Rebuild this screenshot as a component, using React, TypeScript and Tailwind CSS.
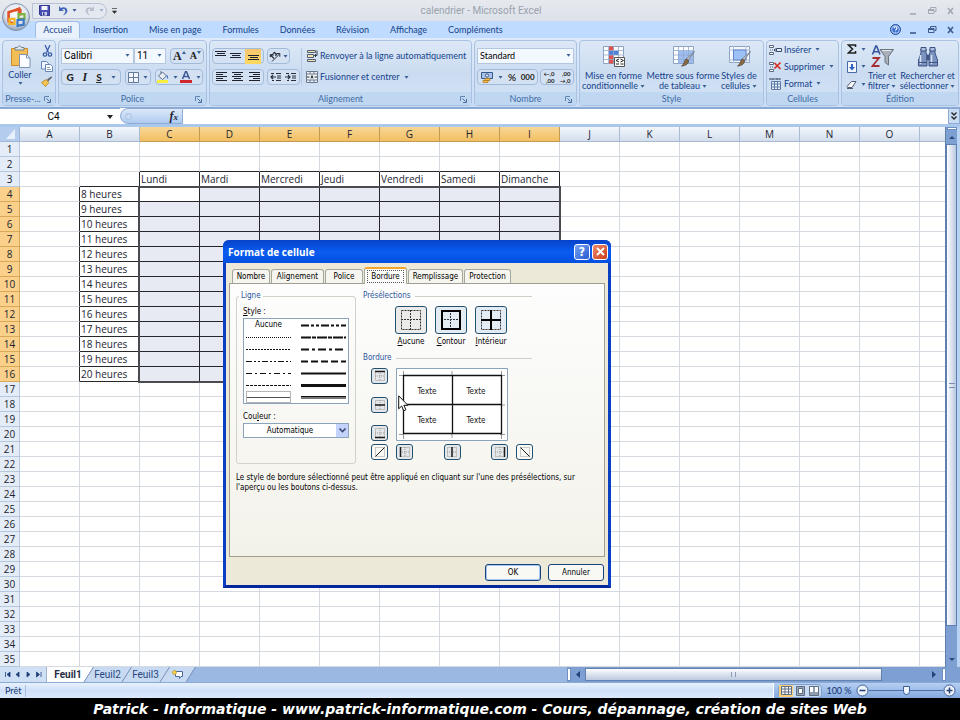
import type { ReactNode } from "react";
import clsx from "clsx";

const columns = ["A", "B", "C", "D", "E", "F", "G", "H", "I", "J", "K", "L", "M", "N", "O"];
const days = ["Lundi", "Mardi", "Mercredi", "Jeudi", "Vendredi", "Samedi", "Dimanche"];
const rows = Array.from({ length: 35 }, (_, i) => i + 1);
const menuTabs = ["Accueil", "Insertion", "Mise en page", "Formules", "Données", "Révision", "Affichage", "Compléments"];
const dialogTabs = [
  ["Nombre", "w-[38px]"],
  ["Alignement", "w-[53px]"],
  ["Police", "w-[38px]"],
  ["Bordure", "w-[43px]"],
  ["Remplissage", "w-[55px]"],
  ["Protection", "w-[47px]"]
];

const lineStyles = [
  { name: "Pointillé fin", dash: "1 1", width: 1 },
  { name: "Pointillé", dash: "2 1", width: 1 },
  { name: "Tiret deux points", dash: "6 2 2 2 2 2", width: 1 },
  { name: "Tiret point", dash: "6 3 2 3", width: 1 },
  { name: "Tirets fins", dash: "3 1", width: 1 },
  { name: "Continu fin", dash: "", width: 1 }
];
const boldStyles = [
  { name: "Tiret deux points moyen", dash: "8 2 3 2 3 2", width: 2 },
  { name: "Tiret point incliné", dash: "10 1 4 1", width: 2 },
  { name: "Tiret point moyen", dash: "8 3 3 3", width: 2 },
  { name: "Tirets moyens", dash: "7 3", width: 2 },
  { name: "Continu moyen", dash: "", width: 2 },
  { name: "Continu épais", dash: "", width: 3 },
  { name: "Double", dash: "", width: 3 }
];

function Caret({ className = "" }: { className?: string }) {
  return (
    <svg viewBox="0 0 5 3" className={clsx("h-[3px] w-[5px] shrink-0", className)} aria-hidden="true">
      <path d="M0.5 0h4L2.5 2.8z" fill="#3b5f94" />
    </svg>
  );
}

function Box({ children, className }: { children: ReactNode; className?: string }) {
  return (
    <div className={clsx("flex h-4 items-center justify-around rounded-sm border border-[#a3bbdb] bg-[#d3e1f3]", className)}>
      {children}
    </div>
  );
}

function IconButton({ label, children, className }: { label: string; children: ReactNode; className?: string }) {
  return (
    <button type="button" aria-label={label} className={clsx("flex items-center justify-center gap-1", className)}>
      {children}
    </button>
  );
}

function Group({ title, width, launcher = true, children }: { title: string; width: string; launcher?: boolean; children: ReactNode }) {
  return (
    <section className={clsx("flex h-[66px] flex-col overflow-hidden rounded-sm border border-[#a9c2e2] bg-linear-to-b from-[#dce8f6] via-[#cbdcf1] to-[#d3e3f7]", width)}>
      <div className="h-[51px]">{children}</div>
      <div className="relative flex h-[13px] items-center justify-center bg-[#c0d7f2] text-[#416ba5]">
        <span className={clsx("leading-3", title.startsWith("Presse") && "pr-3")}>{title}</span>
        {launcher && (
          <button type="button" aria-label={`Options ${title}`} className="absolute right-1 top-1">
            <svg viewBox="0 0 7 7" className="size-[7px]">
              <path d="M0.5 5V0.5H5" fill="none" stroke="#6285b5" />
              <path d="M2.5 2.5l3 3M6.5 3v3.5H3" fill="none" stroke="#4a6f9f" />
            </svg>
          </button>
        )}
      </div>
    </section>
  );
}

function OfficeLogo() {
  return (
    <svg viewBox="0 0 30 30" className="size-[30px]" aria-hidden="true">
      <defs>
        <radialGradient id="orb" cx="50%" cy="35%" r="65%">
          <stop offset="0" stopColor="#ffffff" />
          <stop offset="0.6" stopColor="#dfe5ee" />
          <stop offset="1" stopColor="#8f9fb8" />
        </radialGradient>
      </defs>
      <circle cx="15" cy="15" r="13.5" fill="url(#orb)" stroke="#8291aa" />
      <path d="M13 8.5l5-1.6v4M13 8.5l-5.4 1.8v9L13 22" fill="none" stroke="#e0532a" strokeWidth="2.6" />
      <path d="M14 8.6l4-1.8 1.3 1v5.8" fill="none" stroke="#e0532a" strokeWidth="2.6" />
      <path d="M17.5 12.2h6v4.6h-6z" fill="none" stroke="#7bb33c" strokeWidth="2.2" />
      <path d="M8.5 16.8h5v5h-5z" fill="none" stroke="#f1b52b" strokeWidth="2.2" />
      <path d="M16.5 18.2l6.2-.8v5.2l-6.2 1.2z" fill="none" stroke="#3b78c6" strokeWidth="2.2" />
    </svg>
  );
}

function WindowControls({ color }: { color: string }) {
  return (
    <svg viewBox="0 0 46 10" className="h-2.5 w-[46px]" fill="none" stroke={color} aria-hidden="true">
      <path d="M1 8h6" strokeWidth="1.6" />
      <path d="M21.5 3V1.500h5.500v4h-1.500" />
      <path d="M19.500 3.500h5.500v4h-5.500zM19.500 4.500h5.500" />
      <path d="M39 2l5 6M44 2l-5 6" strokeWidth="1.6" />
    </svg>
  );
}

function TitleBar() {
  return (
    <header className="flex h-[21px] items-center bg-linear-to-b from-[#e6e9ee] to-[#dde2ea] pl-8">
      <div className="flex h-4 w-[75px] items-center gap-2 rounded-r-full border border-[#b8c2d3] bg-[#e3e8f1] pl-1.5">
        <button type="button" aria-label="Enregistrer">
          <svg viewBox="0 0 11 11" className="size-[11px]">
            <path d="M0.500 0.500h10v10h-9l-1-1z" fill="#4a4fb4" stroke="#33388c" />
            <path d="M2.500 1h6v4h-6z" fill="#f4f6fb" />
            <path d="M3 7h5v3.500H3z" fill="#c9cdec" />
            <path d="M4 7.500h1.500V10H4z" fill="#33388c" />
          </svg>
        </button>
        <IconButton label="Annuler la frappe">
          <svg viewBox="0 0 10 10" className="size-2.5">
            <path d="M1 0v5h5L4.300 3.400C6 2.400 7.600 3.500 7.300 5.400 7.100 7 6 8 5 9.500 8 8 9.600 6.500 9.400 4.200 9 1.300 5.400.3 2.800 2z" fill="#4466b8" />
          </svg>
          <Caret />
        </IconButton>
        <IconButton label="Rétablir" className="opacity-40">
          <svg viewBox="0 0 10 10" className="size-2.5">
            <path d="M9 0v5H4l1.700-1.600C4 2.400 2.400 3.500 2.700 5.400 2.900 7 4 8 5 9.500 2 8 .4 6.500.6 4.200 1 1.300 4.600.3 7.200 2z" fill="#7a8599" />
          </svg>
          <Caret />
        </IconButton>
      </div>
      <button type="button" aria-label="Personnaliser la barre" className="ml-[5px]">
        <svg viewBox="0 0 5 6" className="h-1.5 w-[5px]">
          <path d="M0 .5h5M.5 3h4L2.500 5.500z" fill="#333" stroke="#333" strokeWidth=".7" />
        </svg>
      </button>
      <h1 className="flex-1 pr-16 text-center font-[Roboto] text-[10px] text-[#9aa2ae]">calendrier - Microsoft Excel</h1>
      <div className="pr-[5px]">
        <WindowControls color="#a3a9b3" />
      </div>
    </header>
  );
}

function MenuTabs() {
  return (
    <nav className="flex h-[17px] items-end bg-[#bfdbff] pl-[35px] text-[#15428b]">
      {menuTabs.map((tab, i) => (
        <button
          key={tab}
          type="button"
          className={clsx(
            "h-[17px] leading-4",
            i === 0 ? "-mr-2 w-[45px] rounded-t-sm border border-b-0 border-[#9ebce6] bg-[#e8f1fc]" : "ml-[21px]"
          )}
        >
          {tab}
        </button>
      ))}
      <div className="flex flex-1 items-center justify-end gap-2 self-center pr-[5px]">
        <svg viewBox="0 0 11 11" className="size-[11px]" role="img" aria-label="Aide">
          <circle cx="5.500" cy="5.500" r="5" fill="#3a6fd0" stroke="#274f9f" />
          <circle cx="5.500" cy="5.500" r="3.900" fill="none" stroke="#b9d2f7" />
          <path d="M4 4.300c0-2 3-2 3 0 0 1.200-1.500 1.100-1.500 2.300M5.500 7.700v.8" fill="none" stroke="#fff" strokeWidth="1.100" />
        </svg>
        <WindowControls color="#3c5a8c" />
      </div>
    </nav>
  );
}

function Lines({ rows: list }: { rows: number[][] }) {
  return (
    <svg viewBox="0 0 11 10" className="h-2.5 w-[11px]" stroke="#1d222e" shapeRendering="crispEdges" aria-hidden="true">
      {list.map(([x, y, w], i) => (
        <path key={i} d={`M${x} ${y - 0.5}h${w}`} />
      ))}
    </svg>
  );
}

function Indent({ flip = false }: { flip?: boolean }) {
  return (
    <svg viewBox="0 0 12 10" className="h-2.5 w-3" fill="none" stroke="#2a2f3c" strokeWidth="1.200" aria-hidden="true">
      <path d="M1 1.500h3M6 1.500h5M7 4h4M7 6h4M6 8.500h5M2 8.500h2" />
      <path d={flip ? "M0 5h5M3 3l2 2-2 2" : "M1 5h5M3 3L1 5l2 2"} />
    </svg>
  );
}

function TableIcon({ kind }: { kind: "conditional" | "format" | "cell" }) {
  return (
    <svg viewBox="0 0 23 23" className="size-[23px]" aria-hidden="true">
      {kind === "cell" ? (
        <>
          <path d="M1.500 1.500h20v16h-20z" fill="#f4f7fb" stroke="#8fa3bd" />
          <path d="M5.500 1v17M18 1v17M1 5h21M1 15h21" stroke="#aebfd5" />
          <path d="M5.500 5h12.500v10H5.500z" fill="#9dc0f5" stroke="#5d86cc" />
        </>
      ) : (
        <>
          <path d="M1.500 1.500h20v17h-20z" fill="#fdfdfe" stroke="#8fa3bd" />
          {kind === "format" && <path d="M6 6h15v12H6z" fill="#9fbdf0" />}
          {kind === "conditional" && (
            <>
              <path d="M7 1.500h5v17H7z" fill="#e0524c" />
              <path d="M7 6h10v4H7z" fill="#4e80d8" />
            </>
          )}
          <path d="M6.500 1v18M11.500 1v18M16.500 1v18M1 5.500h21M1 10h21M1 14.500h21" stroke="#8fa9cf" strokeWidth=".8" />
        </>
      )}
      {kind === "conditional" ? (
        <>
          <path d="M12.500 12.500h10v9h-10z" fill="#fff" stroke="#555" />
          <path d="M17 14l-3 1.500 3 1.500M14 19h3M18.500 14l3 1.500-3 1.500M18.500 19h3" fill="none" stroke="#222" />
        </>
      ) : (
        <>
          <path d="M22.500 6.500l-6.500 9-2-1.500z" fill="#c3c9d2" stroke="#6b7280" strokeWidth=".8" />
          <path d="M16.500 15.500c.5 3-3 5.500-7 5.500 3-1.500 2.500-5 4.500-7z" fill="#8a6a45" stroke="#4e3e2c" strokeWidth=".7" />
        </>
      )}
    </svg>
  );
}

function BigButton({ icon, lines, className }: { icon: ReactNode; lines: [string, string]; className?: string }) {
  return (
    <button type="button" className={clsx("flex flex-col items-center leading-[10px]", className)}>
      <span className="mb-[3px] flex h-[23px] items-center">{icon}</span>
      <span className="whitespace-nowrap">{lines[0]}</span>
      <span className="flex items-center gap-0.5 whitespace-nowrap">
        {lines[1]}
        <Caret />
      </span>
    </button>
  );
}

function CellsIcon({ kind }: { kind: string }) {
  return (
    <svg viewBox="0 0 13 12" className="h-3 w-[13px]" aria-hidden="true">
      {kind === "Format" ? (
        <>
          <path d="M1 1h10M1 0v2M4 0v2M8 0v2M11 0v2" stroke="#4d5b70" fill="none" />
          <path d="M2.500 3.500h9v8h-9zM2.500 6h9M2.500 9h9M5.500 3v9M8.500 3v9" fill="#e8effa" stroke="#5d7ba8" />
        </>
      ) : (
        <>
          <path d="M.5 1.500h4v2h-4zM.5 8.500h4v2h-4z" fill="#fff" stroke="#5a6a82" />
          <path d="M1 6h3" stroke="#5a6a82" strokeDasharray="1 1" />
          {kind === "Insérer" ? (
            <path d="M7.500 4.500h5v3h-5zM5 6h3M6.500 4.500L5 6l1.500 1.500" fill="#e8effa" stroke="#354a6b" />
          ) : (
            <path d="M5.500 2l6 6M11.500 1.500l-6 6" stroke="#d42c22" strokeWidth="1.700" />
          )}
        </>
      )}
    </svg>
  );
}

function Ribbon() {
  return (
    <div className="flex h-[70px] gap-[2px] border-b border-[#8aa9d4] bg-linear-to-b from-[#dfeafa] to-[#c9dcf5] px-0.5 pt-0.5 text-[#15428b]">
      <Group title="Presse-..." width="w-[54px] shrink-0">
        <div className="flex gap-2 pl-1 pt-1">
          <button type="button" className="flex w-[26px] flex-col items-center">
            <svg viewBox="0 0 21 23" className="h-[23px] w-[21px]" aria-hidden="true">
              <path d="M1.500 3.500h16v17h-16z" fill="#f3bd55" stroke="#c98b2c" />
              <path d="M5 4.500V2.500h2.500C8 .5 11 .5 11.500 2.500H14v2.500H5z" fill="#dfe4ea" stroke="#75808e" />
              <path d="M9.500 9.500h7l3.500 3.500v9.500H9.500z" fill="#fafcff" stroke="#7f93b5" />
              <path d="M16.500 9.500V13H20" fill="none" stroke="#7f93b5" />
            </svg>
            <span className="mt-px leading-[11px]">Coller</span>
            <Caret className="mt-0.5" />
          </button>
          <div className="flex flex-col gap-1">
            <IconButton label="Couper">
              <svg viewBox="0 0 11 12" className="h-3 w-[11px]" fill="none" stroke="#3c5fa8">
                <path d="M3 0l3.500 7.500M8 0L4.500 7.500" strokeWidth="1.300" />
                <circle cx="3" cy="9.500" r="1.700" strokeWidth="1.300" />
                <circle cx="8" cy="9.500" r="1.700" strokeWidth="1.300" />
              </svg>
            </IconButton>
            <IconButton label="Copier">
              <svg viewBox="0 0 12 11" className="h-[11px] w-3">
                <path d="M.5.5h5l2 2v5.500h-7z" fill="#eef4fd" stroke="#6783b5" />
                <path d="M4.500 3.500h5l2 2v5h-7z" fill="#fff" stroke="#6783b5" />
                <path d="M6 6.500h3M6 8.500h4" stroke="#6783b5" strokeWidth=".8" />
              </svg>
            </IconButton>
            <IconButton label="Reproduire la mise en forme">
              <svg viewBox="0 0 12 11" className="h-[11px] w-3">
                <path d="M11.500 1L7 5.500 5.500 4 10 .5z" fill="#5a5f6b" />
                <path d="M5 3.500L8 6.500 4.500 10.500.5 6.500z" fill="#f4c352" stroke="#b58722" strokeWidth=".8" />
              </svg>
            </IconButton>
          </div>
        </div>
      </Group>

      <Group title="Police" width="w-[149px] shrink-0">
        <div className="flex flex-col gap-[5px] pl-0.5 pr-px pt-[7px]">
          <div className="flex gap-1">
            <div className="flex">
              {[["Police", "Calibri", "w-[73px]"], ["Taille", "11", "w-8"]].map(([label, value, width]) => (
                <div key={label} className={clsx("relative", width)}>
                  <select aria-label={label} className="h-4 w-full appearance-none border border-[#b3c7e1] bg-[#f3f8fe] pl-0.5 font-[Roboto] text-[10px] leading-3 text-black">
                    <option>{value}</option>
                  </select>
                  <Caret className="pointer-events-none absolute right-1 top-1.5" />
                </div>
              ))}
            </div>
            <Box className="w-[34px]">
              <IconButton label="Agrandir la police" className="font-['Liberation_Serif'] text-xs font-bold leading-3 text-[#222]">
                A<svg viewBox="0 0 4 3" className="-ml-1 mb-2 h-[3px] w-1"><path d="M0 3h4L2 0z" fill="#3b5f94" /></svg>
              </IconButton>
              <IconButton label="Réduire la police" className="font-['Liberation_Serif'] text-[10px] font-bold leading-3 text-[#222]">
                A<svg viewBox="0 0 4 3" className="-ml-1 mb-2 h-[3px] w-1"><path d="M0 0h4L2 3z" fill="#3b5f94" /></svg>
              </IconButton>
            </Box>
          </div>
          <div className="flex gap-1">
            <Box className="w-[60px] text-[10px] text-[#222]">
              <IconButton label="Gras" className="font-black">G</IconButton>
              <IconButton label="Italique" className="font-['Liberation_Serif'] text-xs font-bold italic leading-3">I</IconButton>
              <IconButton label="Souligné" className="font-bold underline">S</IconButton>
              <Caret />
            </Box>
            <Box className="w-[26px]">
              <IconButton label="Bordures">
                <svg viewBox="0 0 11 11" className="size-[11px]">
                  <path d="M.5.5h10v10H.5zM5.500 1v9M1 5.500h9" fill="#f3f7fd" stroke="#64799b" />
                </svg>
                <Caret />
              </IconButton>
            </Box>
            <Box className="w-12">
              <IconButton label="Couleur de remplissage">
                <svg viewBox="0 0 12 12" className="size-3">
                  <path d="M5.500 1L1.500 5l4 3.500L9.500 5zM4 3V0" fill="#e9eef6" stroke="#5e6f8b" />
                  <path d="M9 4c2 0 2.500 2 2 4-1-1-1-2-2-4z" fill="#3f6ec3" />
                  <path d="M0 9h11v3H0z" fill="#f5ee3d" />
                </svg>
                <Caret />
              </IconButton>
              <IconButton label="Couleur de police">
                <svg viewBox="0 0 12 12" className="size-3">
                  <path d="M2.500 8L5.500.8h1L9.500 8M4 5.500h4" fill="none" stroke="#3e5a96" strokeWidth="1.500" />
                  <path d="M0 9h12v3H0z" fill="#d0262d" />
                </svg>
                <Caret />
              </IconButton>
            </Box>
          </div>
        </div>
      </Group>

      <Group title="Alignement" width="w-[263px] shrink-0">
        <div className="flex pt-[7px]">
          <div className="flex w-[92px] flex-col gap-[5px] border-r border-[#b4cae6] pl-0.5">
            <div className="flex gap-[3px]">
              <Box className="w-[52px]">
                <IconButton label="Aligner en haut"><Lines rows={[[0, 1, 11], [2, 3, 8], [0, 5, 11]]} /></IconButton>
                <IconButton label="Aligner au centre"><Lines rows={[[0, 3, 11], [2, 5, 8], [0, 7, 11]]} /></IconButton>
                <IconButton label="Aligner en bas" className="h-[15px] w-4 bg-linear-to-b from-[#f7c572] to-[#fcd95c]"><Lines rows={[[0, 5, 11], [2, 7, 8], [0, 9, 11]]} /></IconButton>
              </Box>
              <Box className="w-[23px]">
                <IconButton label="Orientation">
                  <svg viewBox="0 0 12 11" className="h-[11px] w-3" fill="none" stroke="#2a2f3c">
                    <path d="M3 10.500L10.500 3M7.500 2.500h3.300v3.300" />
                    <path d="M1 3.500l4 4M1.500 6c-1-2 2-3.500 3-1.500M5 1l3 3M4 2.500c2-1.500 4 .5 2.500 2.500" strokeWidth="1.200" />
                  </svg>
                  <Caret className="-ml-0.5" />
                </IconButton>
              </Box>
            </div>
            <div className="flex gap-[3px]">
              <Box className="w-[52px]">
                <IconButton label="Gauche"><Lines rows={[[0, 1, 11], [0, 3, 7], [0, 5, 11], [0, 7, 7], [0, 9, 11]]} /></IconButton>
                <IconButton label="Centrer"><Lines rows={[[0, 1, 11], [2, 3, 7], [0, 5, 11], [2, 7, 7], [0, 9, 11]]} /></IconButton>
                <IconButton label="Droite"><Lines rows={[[0, 1, 11], [4, 3, 7], [0, 5, 11], [4, 7, 7], [0, 9, 11]]} /></IconButton>
              </Box>
              <Box className="w-[33px]">
                <IconButton label="Diminuer le retrait"><Indent /></IconButton>
                <IconButton label="Augmenter le retrait"><Indent flip /></IconButton>
              </Box>
            </div>
          </div>
          <div className="flex flex-col items-start gap-[5px] pl-1 text-[#15428b]">
            <button type="button" className="flex h-4 items-center gap-0.5 whitespace-nowrap">
              <svg viewBox="0 0 12 12" className="size-3" aria-hidden="true">
                <path d="M1.500.5h8v2h-8zM1.500 4.500h6v3h-6zM1.500 9.500h8v2h-8z" fill="#f3e3b9" stroke="#555e6e" />
                <path d="M11 .5v5H8.500M10 4L8.500 5.500 10 7" fill="none" stroke="#333c4d" />
              </svg>
              Renvoyer à la ligne automatiquement
            </button>
            <button type="button" className="flex h-4 items-center gap-0.5 whitespace-nowrap">
              <svg viewBox="0 0 12 12" className="size-3" aria-hidden="true">
                <path d="M.5.5h11v11H.5z" fill="#f4f7fc" stroke="#68788f" />
                <path d="M.5 3h11M.5 9h11M4 .5V3M8 .5V3M4 9v2.500M8 9v2.500" stroke="#68788f" />
                <path d="M1 6h2.500M8.500 6H11M5 7.500L6 4.500l1 3" fill="none" stroke="#222" />
              </svg>
              Fusionner et centrer
              <Caret className="ml-0.5" />
            </button>
          </div>
        </div>
      </Group>

      <Group title="Nombre" width="w-[103px] shrink-0">
        <div className="flex flex-col gap-[5px] px-0.5 pt-[7px]">
          <div className="relative">
            <select aria-label="Format de nombre" className="h-4 w-full appearance-none border border-[#b3c7e1] bg-[#f3f8fe] pl-0.5 leading-3 text-black">
              <option>Standard</option>
            </select>
            <Caret className="pointer-events-none absolute right-[3px] top-1.5" />
          </div>
          <div className="flex justify-between">
            <Box className="w-[61px] text-[10px] text-[#222]">
              <IconButton label="Comptabilité">
                <svg viewBox="0 0 14 12" className="h-3 w-3.5">
                  <path d="M1.500 1.500h11v6h-11z" fill="#a9c3ea" stroke="#38558c" />
                  <circle cx="7" cy="4.500" r="1.600" fill="#e9f0fb" stroke="#38558c" />
                  <path d="M5 7.500h5v2H5zM3 9.500h5v2H3z" fill="#f6c452" stroke="#b37a1d" strokeWidth=".8" />
                </svg>
                <Caret />
              </IconButton>
              <IconButton label="Pourcentage" className="font-semibold">%</IconButton>
              <IconButton label="Séparateur de milliers" className="text-[8px] font-bold">000</IconButton>
            </Box>
            <Box className="w-[34px] text-[6px] font-bold leading-[7px] text-[#222]">
              <button type="button" aria-label="Ajouter une décimale" className="text-right">←,0<br />,00</button>
              <button type="button" aria-label="Réduire les décimales" className="text-right">,00<br />→,0</button>
            </Box>
          </div>
        </div>
      </Group>

      <Group title="Style" width="w-[185px] shrink-0" launcher={false}>
        <div className="flex gap-0.5 pl-0.5 pt-1">
          <BigButton className="w-[63px]" icon={<TableIcon kind="conditional" />} lines={["Mise en forme", "conditionnelle"]} />
          <BigButton className="w-[72px]" icon={<TableIcon kind="format" />} lines={["Mettre sous forme", "de tableau"]} />
          <BigButton className="w-9" icon={<TableIcon kind="cell" />} lines={["Styles de", "cellules"]} />
        </div>
      </Group>

      <Group title="Cellules" width="w-[73px] shrink-0" launcher={false}>
        <div className="flex h-full flex-col justify-around pl-0.5">
          {["Insérer", "Supprimer", "Format"].map((name) => (
            <button key={name} type="button" className="flex items-center gap-0.5 leading-3">
              <CellsIcon kind={name} />
              {name}
              <Caret className="ml-0.5" />
            </button>
          ))}
        </div>
      </Group>

      <Group title="Édition" width="min-w-[118px] flex-1" launcher={false}>
        <div className="flex h-full pl-1">
          <div className="flex w-[20px] flex-col justify-around">
            <IconButton label="Somme automatique" className="text-[#222]">
              <svg viewBox="0 0 10 10" className="size-2.5"><path d="M8.500 3V1H1.500l4 4-4 4h7V7" fill="none" stroke="#222" strokeWidth="1.600" /></svg>
              <Caret />
            </IconButton>
            <IconButton label="Remplissage">
              <svg viewBox="0 0 10 12" className="h-3 w-2.5">
                <path d="M.5.5h9v11h-9z" fill="#f3f7fe" stroke="#4769a8" />
                <path d="M4 3h2v3h2L5 9.500 2 6h2z" fill="#2f62c4" />
              </svg>
              <Caret />
            </IconButton>
            <IconButton label="Effacer">
              <svg viewBox="0 0 11 9" className="h-[9px] w-[11px]">
                <path d="M1 6.500L5.500 1.500h4.500L6 7.500H1.500z" fill="#fdfdfe" stroke="#4f5b70" />
                <path d="M1 8.500h6" stroke="#4f5b70" />
              </svg>
              <Caret />
            </IconButton>
          </div>
          <BigButton
            className="w-8 pt-1"
            icon={
              <svg viewBox="0 0 23 23" className="size-[23px]" aria-hidden="true">
                <path d="M1.500 9.500L4.800 1h.8L9 9.500M2.800 6.800h5" fill="none" stroke="#38549b" strokeWidth="1.600" />
                <path d="M1.500 13h6.500l-6.500 8h7" fill="none" stroke="#a52f35" strokeWidth="1.800" />
                <path d="M9 4.500h13.500l-5 7v8.500l-3.500-2.500v-6z" fill="#a9b0ba" stroke="#6b737f" />
                <path d="M11 5.500h9" stroke="#e6e9ee" strokeWidth="1.200" />
              </svg>
            }
            lines={["Trier et", "filtrer"]}
          />
          <BigButton
            className="w-[59px] pt-1"
            icon={
              <svg viewBox="0 0 22 21" className="h-[21px] w-[22px]" aria-hidden="true">
                <path d="M4 3h5v4l1 1v12H1.500v-6L4 7zM13 3h5v4l2.500 7v6H12V8l1-1z" fill="#7c93bf" stroke="#3d5384" />
                <path d="M4 1.500h5V5H4zM13 1.500h5V5h-5z" fill="#aebfe0" stroke="#3d5384" />
                <path d="M9.500 9h3v5h-3z" fill="#3d5384" />
                <path d="M3.500 9v9M14.500 9v9" stroke="#dbe5f7" strokeWidth="1.500" />
                <path d="M1.500 16.500H10M12 16.500h8.500" stroke="#3d5384" />
              </svg>
            }
            lines={["Rechercher et", "sélectionner"]}
          />
        </div>
      </Group>
    </div>
  );
}

function FormulaBar() {
  return (
    <div className="flex h-[19px] border-b-[3px] border-[#a9c8ec] bg-white font-[Roboto] text-[10px]">
      <input aria-label="Zone Nom" defaultValue="C4" className="h-4 w-[107px] border-t border-[#8aa9d4] bg-white text-center text-black" />
      <button type="button" aria-label="Liste des noms" className="flex h-4 w-[13px] items-center border-t border-[#8aa9d4]">
        <svg viewBox="0 0 6 4" className="h-1 w-1.5"><path d="M0 0h6L3 4z" fill="#222" /></svg>
      </button>
      <div className="flex h-4 w-[63px] items-center justify-between rounded-l-full border border-[#8fabd3] bg-linear-to-b from-[#dce9f9] to-[#aecbf0] pl-1 pr-1">
        <span className="size-[7px] rounded-full border border-[#a9bfdf] bg-[#c9dbf2]" />
        <span className="font-['Liberation_Serif'] text-xs font-bold italic leading-3 text-[#223]">
          f<span className="text-[9px]">x</span>
        </span>
      </div>
      <input aria-label="Barre de formule" className="h-4 min-w-0 flex-1 border-t border-[#8aa9d4] bg-white" />
      <button type="button" aria-label="Développer" className="flex h-4 w-3 items-center justify-center border border-[#8fabd3] bg-[#c8dcf4]">
        <svg viewBox="0 0 6 8" className="h-2 w-1.5" fill="none" stroke="#222" strokeWidth="1.300">
          <path d="M.5.5L3 3 5.500.5M.5 4.500L3 7l2.500-2.500" />
        </svg>
      </button>
    </div>
  );
}

function cellText(row: number, col: number) {
  if (row === 3 && col >= 2 && col <= 8) return days[col - 2];
  if (row >= 4 && row <= 16 && col === 1) return `${row + 4} heures`;
  return "";
}

function Sheet() {
  return (
    <div className="relative min-w-0 flex-1 overflow-hidden">
      <table className="w-full table-fixed border-separate border-spacing-0 font-['Open_Sans',sans-serif] text-[10px] leading-[14px] text-[#1c2430]">
        <colgroup>
          <col className="w-5" />
          {columns.map((c) => (
            <col key={c} className="w-[60px]" />
          ))}
          <col />
        </colgroup>
        <thead>
          <tr className="h-[15px]">
            <th aria-label="Tout sélectionner" className="border-b border-r border-[#9eb6d4] bg-[#b4cdee] p-0">
              <svg viewBox="0 0 19 14" className="block h-3.5 w-full"><path d="M15 2v10H6z" fill="#e7f0fb" /></svg>
            </th>
            {columns.map((c, i) => (
              <th
                key={c}
                className={clsx(
                  "border-b border-r p-0 font-normal",
                  i >= 2 && i <= 8
                    ? "border-[#c29a52] bg-linear-to-b from-[#f8d797] to-[#f2bf61]"
                    : "border-[#a9bbd1] bg-linear-to-b from-[#f3f7fc] to-[#d3deec]"
                )}
              >
                {c}
              </th>
            ))}
            <th aria-label="P" className="border-b border-[#a9bbd1] bg-linear-to-b from-[#f3f7fc] to-[#d3deec] p-0" />
          </tr>
        </thead>
        <tbody>
          {rows.map((row) => (
            <tr key={row} className="h-[15px]">
              <th
                className={clsx(
                  "border-b border-r p-0 font-normal",
                  row >= 4 && row <= 16 ? "border-[#d9a95a] bg-[#fad08a]" : "border-[#b6c8de] bg-[#e4ecf7]"
                )}
              >
                {row}
              </th>
              {columns.map((c, col) => {
                const table = col >= 2 && col <= 8;
                const blackRight = (row >= 3 && row <= 16 && col >= 1 && col <= 8) || (row >= 4 && row <= 16 && col === 0);
                const blackBottom = (row >= 2 && row <= 16 && table) || (row >= 3 && row <= 16 && col === 1);
                return (
                  <td
                    key={c}
                    className={clsx(
                      "overflow-hidden whitespace-nowrap border-b border-r p-0 pl-px",
                      blackRight ? "border-r-[#26262b]" : "border-r-[#d5dae1]",
                      blackBottom ? "border-b-[#26262b]" : "border-b-[#d5dae1]",
                      table && row >= 4 && row <= 16 && !(row === 4 && col === 2) ? "bg-[#e8eaf3]" : "bg-white"
                    )}
                  >
                    {cellText(row, col)}
                  </td>
                );
              })}
              <td className="border-b border-[#d5dae1] bg-white p-0" />
            </tr>
          ))}
        </tbody>
      </table>
      {/* selection C4:I16 */}
      <div className="pointer-events-none absolute left-[138px] top-[59px] h-[197px] w-[423px] border-2 border-[#4a4a50]" />
    </div>
  );
}

function VerticalScroll() {
  return (
    <div className="flex w-[15px] shrink-0 flex-col items-center border-l border-r-[3px] border-l-[#5d7fa9] border-r-[#b9d3f3] bg-[#7d9fd1]">
      <div className="h-[3px] w-2.5 border border-[#6e8fc2] bg-white" />
      <button type="button" aria-label="Défiler vers le haut" className="flex h-[14px] items-center">
        <svg viewBox="0 0 6 3" className="h-[3px] w-1.5"><path d="M0 3h6L3 0z" fill="#2c4a80" /></svg>
      </button>
      <div className="flex w-full flex-1 items-center justify-center border border-[#5d7fb3] bg-linear-to-r from-white to-[#b8c8e0]">
        <span className="h-[5px] w-1.5 border-y border-[#7a8fb0]" />
      </div>
      <button type="button" aria-label="Défiler vers le bas" className="flex h-[41px] items-end pb-1.5">
        <svg viewBox="0 0 6 3" className="h-[3px] w-1.5"><path d="M0 0h6L3 3z" fill="#2c4a80" /></svg>
      </button>
    </div>
  );
}

function Edge({ left, right }: { left: string; right: string }) {
  return (
    <svg viewBox="0 0 11 15" className="h-[15px] w-[11px] shrink-0" aria-hidden="true">
      <path d="M0 0h11v15H0z" fill={right} />
      <path d="M0 0h10L1 15H0z" fill={left} />
      <path d="M10.500 0L1 15" stroke="#7590b8" />
    </svg>
  );
}

function SheetTabs() {
  const arrows = ["M1.500 1v5M6 1L3 3.500 6 6z", "M5 1L2 3.500 5 6z", "M2 1l3 2.500L2 6z", "M1.500 1l3 2.500-3 2.500zM6 1v5"];
  return (
    <div className="flex h-[15px] items-stretch bg-[#9ab8e2] font-[Roboto] text-[10px] text-[#27467e]">
      <div className="flex w-[47px] items-center justify-around border-r border-[#9db4d4] bg-[#cfe0f5] px-0.5">
        {arrows.map((d, i) => (
          <button key={d} type="button" aria-label={`Onglets ${i + 1}`}>
            <svg viewBox="0 0 7 7" className="size-[7px]" fill="#20407a" stroke="#20407a" strokeWidth=".8"><path d={d} /></svg>
          </button>
        ))}
      </div>
      <button type="button" className="w-9 bg-white pl-1.5 text-center font-bold leading-4 text-[#1f2c44]">Feuil1</button>
      <Edge left="#fff" right="#c7daf2" />
      <button type="button" className="w-[27px] bg-[#c7daf2] leading-4">Feuil2</button>
      <Edge left="#c7daf2" right="#c7daf2" />
      <button type="button" className="w-[27px] bg-[#c7daf2] leading-4">Feuil3</button>
      <Edge left="#c7daf2" right="#c7daf2" />
      <IconButton label="Insérer une feuille" className="w-[15px] bg-[#c7daf2]">
        <svg viewBox="0 0 12 9" className="h-[9px] w-3">
          <path d="M3.500 1.500h7v5H9L7.500 8.500V6.500h-4z" fill="#fff" stroke="#4c6a9e" />
          <circle cx="2.500" cy="2.500" r="2" fill="#f3cf4c" stroke="#b58f21" strokeWidth=".6" />
        </svg>
      </IconButton>
      <Edge left="#c7daf2" right="#9ab8e2" />
      <div className="flex-1" />
      <div className="flex w-[393px] items-stretch bg-[#7d9fd1] py-px">
        <span className="w-1 border border-[#6e8fc2] bg-white" />
        <button type="button" aria-label="Défiler à gauche" className="flex w-3.5 items-center justify-center">
          <svg viewBox="0 0 4 7" className="h-[7px] w-1"><path d="M4 0v7L0 3.500z" fill="#23427a" /></svg>
        </button>
        <div className="flex w-[297px] items-center justify-center border border-[#6482b0] bg-linear-to-b from-[#fbfcfe] to-[#bccade]">
          <span className="h-[5px] w-[5px] border-x border-[#8a9ab3]" />
        </div>
        <button type="button" aria-label="Défiler à droite" className="flex flex-1 items-center justify-end pr-1.5">
          <svg viewBox="0 0 4 7" className="h-[7px] w-1"><path d="M0 0v7l4-3.500z" fill="#23427a" /></svg>
        </button>
        <span className="mr-3.5 w-1 border border-[#6e8fc2] bg-white" />
      </div>
    </div>
  );
}

function StatusBar() {
  return (
    <div className="flex h-4 items-center border-t border-[#8aa9d4] bg-linear-to-b from-[#e9f2fd] via-[#cfe0f8] to-[#dbe9fb] text-[#15346f]">
      <span className="w-[26px] border-r border-[#a8c0e0] pl-[5px] leading-3">Prêt</span>
      <div className="flex-1" />
      <div className="flex h-full w-[187px] items-center border-l border-white bg-linear-to-b from-[#b5cff2] to-[#84a9df] pl-1">
        <div className="flex h-3.5 items-center rounded-sm border border-[#7d9fd1] bg-[#c8dbf3]">
          <IconButton label="Normal" className="h-3 w-3.5 bg-[#fbd27a]">
            <svg viewBox="0 0 11 9" className="h-[9px] w-[11px]"><path d="M.5.5h10v8H.5zM.5 3h10M.5 6h10M4 .5v8M7.500.5v8" fill="#fff" stroke="#5e6c82" /></svg>
          </IconButton>
          <IconButton label="Mise en page" className="h-3 w-3.5">
            <svg viewBox="0 0 9 10" className="h-2.5 w-[9px]"><path d="M.5.500h8v9h-8z" fill="#9aa7ba" stroke="#5e6c82" /><path d="M2.500 2.500h4v5h-4z" fill="#fff" stroke="#5e6c82" /></svg>
          </IconButton>
          <IconButton label="Sauts de page" className="h-3 w-3.5">
            <svg viewBox="0 0 10 10" className="size-2.5"><path d="M.5.500h9v9h-9z" fill="#8f9cb1" stroke="#5e6c82" /><path d="M1 1h3v5H1zM6 1h3v5H6z" fill="#fff" /></svg>
          </IconButton>
        </div>
        <span className="w-[34px] text-center">100 %</span>
        <button type="button" aria-label="Zoom arrière">
          <svg viewBox="0 0 13 13" className="size-[13px]"><circle cx="6.500" cy="6.500" r="5.500" fill="#eef4fc" stroke="#3d5c93" /><path d="M3.500 6.500h6" stroke="#2c4678" strokeWidth="1.600" /></svg>
        </button>
        <input
          type="range"
          aria-label="Zoom"
          className="h-3 min-w-0 flex-1 appearance-none bg-transparent [&::-webkit-slider-runnable-track]:h-px [&::-webkit-slider-runnable-track]:bg-[#4d6ea8] [&::-webkit-slider-thumb]:-mt-1 [&::-webkit-slider-thumb]:h-[9px] [&::-webkit-slider-thumb]:w-[7px] [&::-webkit-slider-thumb]:appearance-none [&::-webkit-slider-thumb]:rounded-b-full [&::-webkit-slider-thumb]:border [&::-webkit-slider-thumb]:border-[#3d5c93] [&::-webkit-slider-thumb]:bg-[#eef4fc]"
        />
        <button type="button" aria-label="Zoom avant" className="pr-1">
          <svg viewBox="0 0 13 13" className="size-[13px]"><circle cx="6.500" cy="6.500" r="5.500" fill="#eef4fc" stroke="#3d5c93" /><path d="M3.500 6.500h6M6.500 3.500v6" stroke="#2c4678" strokeWidth="1.600" /></svg>
        </button>
      </div>
    </div>
  );
}

function StyleLine({ name, dash, width, selected = false }: { name: string; dash: string; width: number; selected?: boolean }) {
  const double = name === "Double";
  return (
    <button type="button" aria-label={name} className={clsx("flex h-3 w-full items-center", selected && "outline-1 -outline-offset-1 outline-[#b5b5b5]")}>
      <svg viewBox="0 0 45 5" className="h-[5px] w-[45px]">
        <path d="M0 2.500h45" stroke={double ? "#777" : "#111"} strokeWidth={width} strokeDasharray={dash} opacity={selected ? 0.75 : 1} />
        {double && <path d="M0 1.500h45" stroke="#111" />}
      </svg>
    </button>
  );
}

type EdgeName = "top" | "middle" | "bottom" | "left" | "center" | "right" | "up" | "down";

const edgePaths: Record<EdgeName, string> = {
  top: "M1 1.500h10",
  middle: "M1 6h10",
  bottom: "M1 10.500h10",
  left: "M1.500 1v10",
  center: "M6 1v10",
  right: "M10.500 1v10",
  up: "M1.500 10.500l9-9",
  down: "M1.500 1.500l9 9"
};

function EdgeButton({ edge }: { edge: EdgeName }) {
  const diagonal = edge === "up" || edge === "down";
  return (
    <button
      type="button"
      aria-label={`Bordure ${edge}`}
      className={clsx(
        "flex h-4 w-[17px] items-center justify-center rounded-[3px] border border-[#24506f]",
        diagonal ? "bg-[#f8f8f5]" : "bg-[#e4e7ea]"
      )}
    >
      <svg viewBox="0 0 12 12" className="size-3" fill="none">
        <path d={diagonal ? "M1.500 1.500h9v9h-9z" : "M1.500 1.500h9v9h-9zM6 1v10M1 6h10"} stroke="#9a9a96" strokeDasharray="1 1" />
        <path d={edgePaths[edge]} stroke="#1c1c1c" strokeWidth={diagonal ? 1 : 1.5} />
      </svg>
    </button>
  );
}

function Preset({ kind, label }: { kind: "none" | "outline" | "inside"; label: string }) {
  return (
    <div className="flex w-8 flex-col items-center gap-0.5">
      <button
        type="button"
        id={`preset-${kind}`}
        aria-label={label}
        className={clsx(
          "flex h-7 w-full items-center justify-center rounded-[3px] border border-[#24506f]",
          kind === "none" ? "bg-[#ebebe9]" : "bg-[#e3ebf3]"
        )}
      >
        <svg viewBox="0 0 22 22" className="size-[22px]" fill="none">
          <path d="M1.500 1.500h19v19h-19zM10.500 1v20M1 10.500h20" stroke="#333" strokeDasharray="2 1" />
          {kind === "outline" && <path d="M2 2h18v18H2z" stroke="#000" strokeWidth="2" />}
          {kind === "inside" && <path d="M11 1v20M1 11h20" stroke="#000" strokeWidth="2" />}
        </svg>
      </button>
      <label htmlFor={`preset-${kind}`} className="leading-3">
        <u>{label[0]}</u>
        {label.slice(1)}
      </label>
    </div>
  );
}

function Heading({ children }: { children: ReactNode }) {
  return (
    <h3 className="flex items-center gap-1 leading-3 text-[#2a559c]">
      {children}
      <span className="h-px flex-1 bg-[#d0d0c8]" />
    </h3>
  );
}

function FormatDialog() {
  return (
    <div
      role="dialog"
      aria-label="Format de cellule"
      className="absolute left-[223px] top-60 w-[388px] rounded-t-md border-[3px] border-t-0 border-[#0a3fc4] border-b-[#0527a0] bg-[#ece9d8] font-['DejaVu_Sans_Condensed','DejaVu_Sans',sans-serif] text-[8px] text-black"
    >
      <div className="-mx-[3px] flex h-[23px] items-center gap-0.5 rounded-t-md bg-linear-to-b from-[#0742c9] via-[#0a5cf0] to-[#0350e0] pl-[5px] pr-[3px]">
        <h2 className="flex-1 pt-0.5 font-['Open_Sans'] text-[10px] font-bold text-white">Format de cellule</h2>
        <button type="button" aria-label="Aide" className="flex size-4 items-center justify-center rounded-[3px] border border-white bg-linear-to-br from-[#7ba4f3] to-[#2558d0] text-xs font-bold leading-3 text-white">
          ?
        </button>
        <button type="button" aria-label="Fermer" className="flex size-4 items-center justify-center rounded-[3px] border border-white bg-linear-to-br from-[#eb8b6c] to-[#cc3a14]">
          <svg viewBox="0 0 9 9" className="size-[9px]"><path d="M1 1l7 7M8 1L1 8" stroke="#fff" strokeWidth="1.800" /></svg>
        </button>
      </div>

      <div role="tablist" className="flex h-5 items-end gap-px pl-1.5">
        {dialogTabs.map(([tab, width]) => (
          <button
            key={tab}
            type="button"
            role="tab"
            aria-selected={tab === "Bordure"}
            className={clsx(
              "whitespace-nowrap rounded-t-[3px] border border-b-0 border-[#a5a89c]",
              width,
              tab === "Bordure" ? "z-10 -mb-px h-[17px] border-t-2 border-t-[#f0a52a] bg-[#fcfcfb] px-0.5" : "h-[14px] bg-[#f6f5ef] leading-3"
            )}
          >
            {tab === "Bordure" ? <span className="block border border-dotted border-[#555] leading-[11px]">{tab}</span> : tab}
          </button>
        ))}
      </div>

      <div className="mx-[3px] h-[274px] border border-[#a09f92] bg-linear-to-b from-[#fdfdfd] to-[#f3f2ea] px-1.5 pt-1.5">
        <div className="flex gap-[7px]">
          <fieldset className="h-[174px] w-[120px] rounded-[3px] border border-[#d2d2c8] px-1.5">
            <legend className="-ml-1 px-0.5 leading-3 text-[#2a559c]">Ligne</legend>
            <p className="mt-1 leading-[11px]">
              <u>S</u>tyle :
            </p>
            <div className="mt-px grid h-[86px] grid-cols-2 gap-x-2.5 border border-[#8ba3bb] bg-white px-0.5">
              <div>
                <button type="button" className="h-3 w-full text-center leading-3">Aucune</button>
                {lineStyles.map((s, i) => (
                  <StyleLine key={s.name} {...s} selected={i === 5} />
                ))}
              </div>
              <div>
                {boldStyles.map((s) => (
                  <StyleLine key={s.name} {...s} />
                ))}
              </div>
            </div>
            <label htmlFor="line-color" className="mt-[7px] block leading-3">
              Cou<u>l</u>eur :
            </label>
            <div className="relative">
              <select id="line-color" className="h-[15px] w-full appearance-none border border-[#8ba3bb] bg-white pr-3 leading-3 [text-align-last:center]">
                <option>Automatique</option>
              </select>
              <span className="pointer-events-none absolute right-px top-px flex h-[13px] w-3 items-center justify-center bg-[#c3d3fb]">
                <svg viewBox="0 0 7 5" className="h-[5px] w-[7px]"><path d="M.5.5l3 3 3-3" fill="none" stroke="#3b4f7d" strokeWidth="1.600" /></svg>
              </span>
            </div>
          </fieldset>

          <div className="w-[169px]">
            <Heading>Présélections</Heading>
            <div className="mt-1 flex gap-2 pl-8">
              <Preset kind="none" label="Aucune" />
              <Preset kind="outline" label="Contour" />
              <Preset kind="inside" label="Intérieur" />
            </div>
            <div className="mt-1">
              <Heading>Bordure</Heading>
            </div>
            <div className="mt-1 grid grid-cols-[17px_112px_17px] gap-x-2 gap-y-[3px] pl-2">
              <div className="flex h-[73px] flex-col justify-between">
                <EdgeButton edge="top" />
                <EdgeButton edge="middle" />
                <EdgeButton edge="bottom" />
              </div>
              <svg viewBox="0 0 112 73" className="h-[73px] w-28" aria-label="Aperçu">
                <path d="M.5.5h111v72H.5z" fill="#fff" stroke="#8ba3bb" />
                <path d="M3 7.500h5M7.500 3v5M104 7.500h5M105.500 3v5M56 3v5M3 66.500h5M7.500 66v5M104 66.500h5M105.500 66v5M56 66v4M105 37h4" stroke="#999" />
                <path d="M7.500 7.500h98v58h-98zM56.500 8v58M8 36.500h97" fill="none" stroke="#111" strokeWidth="1.300" />
                <g fontSize="8" textAnchor="middle" fill="#111">
                  <text x="31" y="26">Texte</text>
                  <text x="80" y="26">Texte</text>
                  <text x="31" y="55">Texte</text>
                  <text x="80" y="55">Texte</text>
                </g>
              </svg>
              <span />
              <EdgeButton edge="up" />
              <div className="flex justify-between">
                <EdgeButton edge="left" />
                <EdgeButton edge="center" />
                <EdgeButton edge="right" />
              </div>
              <EdgeButton edge="down" />
            </div>
          </div>
        </div>
        <p className="mt-[9px] w-[350px] leading-[10px]">
          Le style de bordure sélectionné peut être appliqué en cliquant sur l'une des présélections, sur l'aperçu ou les boutons ci-dessus.
        </p>
      </div>

      <div className="flex justify-end gap-[7px] px-1 pb-1 pt-[7px]">
        <button type="button" className="h-[17px] w-14 rounded-[3px] border border-[#14437c] bg-[#f8f8f5] shadow-[inset_0_0_0_1px_#a8c4f0]">OK</button>
        <button type="button" className="h-[17px] w-14 rounded-[3px] border border-[#14437c] bg-[#f8f8f5]">Annuler</button>
      </div>

      <svg viewBox="0 0 12 18" className="pointer-events-none absolute left-[172px] top-[155px] h-[18px] w-3" aria-hidden="true">
        <path d="M.7.8v13l3-2.800 2 4.800 2.200-1-2-4.500h4z" fill="#fff" stroke="#111" />
      </svg>
    </div>
  );
}

export default function App() {
  return (
    <div className="relative flex min-h-screen flex-col overflow-hidden bg-[#bfdbff] font-[Lato,sans-serif] text-[9px]">
      <TitleBar />
      <MenuTabs />
      <button type="button" aria-label="Bouton Office" className="absolute left-px top-0.5">
        <OfficeLogo />
      </button>
      <Ribbon />
      <FormulaBar />
      <main className="flex">
        <Sheet />
        <VerticalScroll />
      </main>
      <SheetTabs />
      <StatusBar />
      <footer className="flex flex-1 items-center justify-center bg-black py-px font-['DejaVu_Sans',sans-serif] text-sm font-bold italic leading-5 text-white">
        Patrick - Informatique - www.patrick-informatique.com - Cours, dépannage, création de sites Web
      </footer>
      <FormatDialog />
    </div>
  );
}
